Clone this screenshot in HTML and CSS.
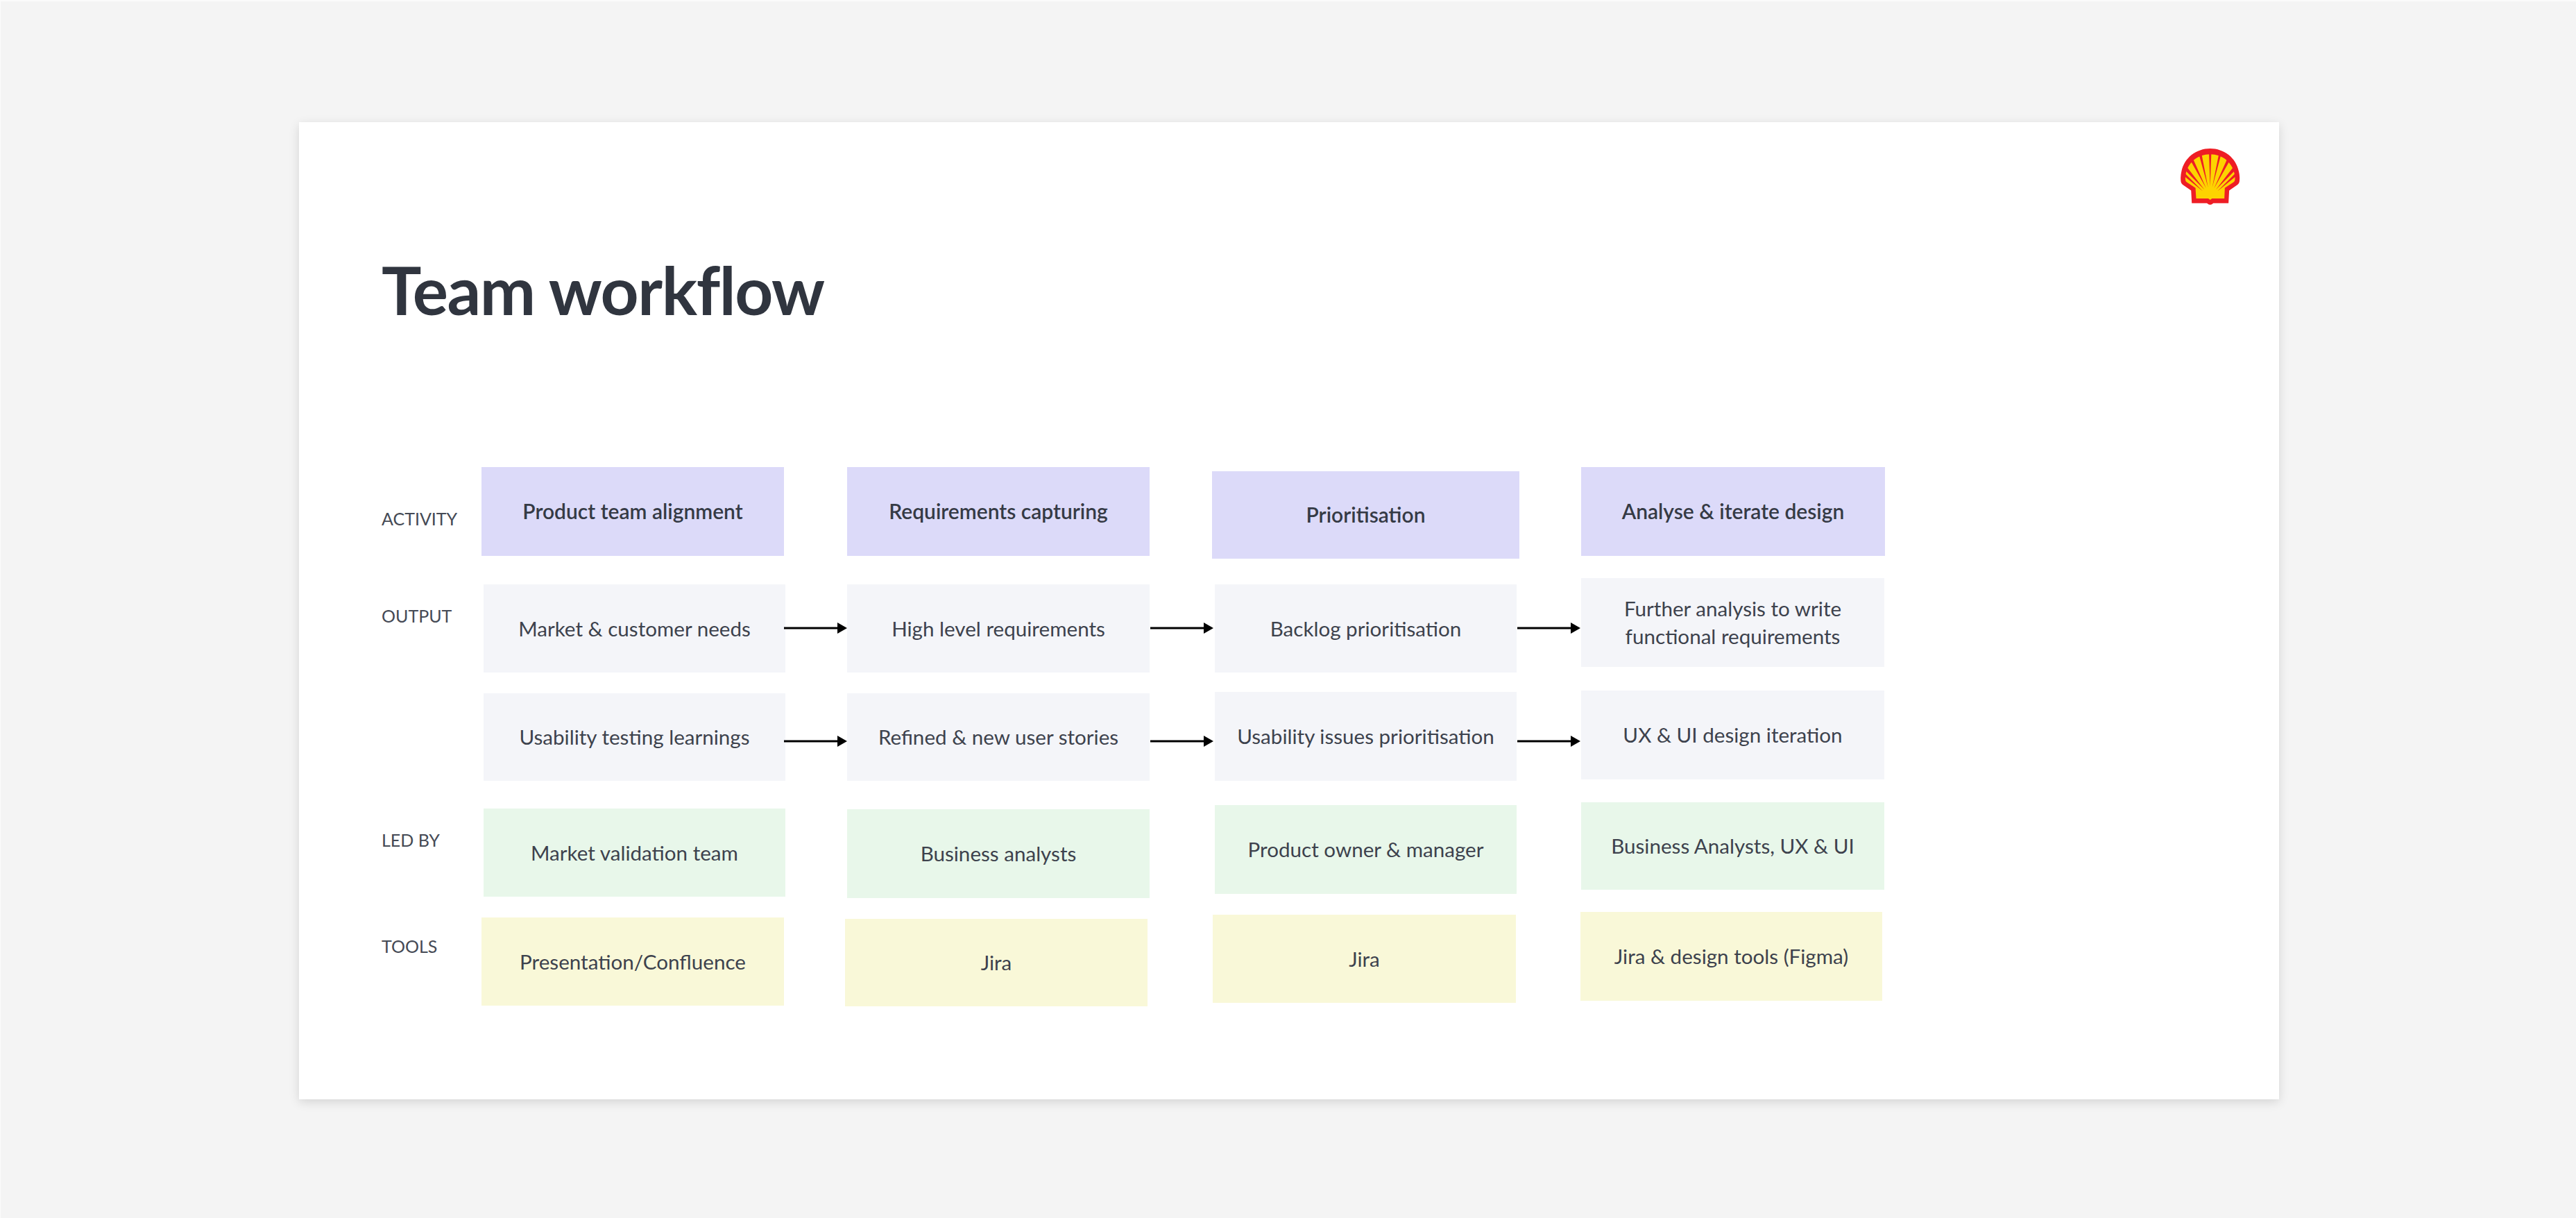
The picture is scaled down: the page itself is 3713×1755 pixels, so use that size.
FILE: index.html
```html
<!DOCTYPE html>
<html lang="en">
<head>
<meta charset="utf-8">
<title>Team workflow</title>
<link rel="stylesheet" href="styles.css">
</head>
<body>
<main class="page">
  <section class="slide">
    <svg class="logo" viewBox="40 25 258 245" aria-label="Shell logo">
      <path class="logo-red" d="M88 263 L85 208 L50 184 Q40 176 40 165 Q38 145 43 125 C55 65 108 25 168 25 C228 25 281 65 293 125 Q298 145 296 165 Q296 176 286 184 L251 208 L248 263 L182 263 Q175 270 168 270 Q161 270 154 263 Z"/>
      <path class="logo-yellow" d="M107 243 L104 197 L66 172 Q60 168 60 160 Q59 150 62 135 C72 85 115 50 168 50 C221 50 264 85 274 135 Q277 150 276 160 Q276 168 270 172 L232 197 L230 243 L176 243 L168 249 L160 243 Z"/>
      <path class="logo-red" d="M163 47 L173 47 L168 190 Z M120 54 L131 50 L159 195 Z M216 50 L205 54 L177 195 Z M84 80 L94 71 L151 199 Z M252 80 L242 71 L185 199 Z M57 118 L67 106 L143 204 Z M279 118 L269 106 L193 204 Z M52 143 L59 134 L136 211 Z M284 143 L277 134 L200 211 Z"/>
    </svg>
    <h1 class="title">Team workflow</h1>
    <div class="board">
      <div class="labels">
        <span class="label">ACTIVITY</span>
        <span class="label">OUTPUT</span>
        <span class="label">LED BY</span>
        <span class="label">TOOLS</span>
      </div>
      <div class="col col-1">
        <div class="card activity">Product team alignment</div>
        <div class="card output">Market &amp; customer needs</div>
        <div class="card output">Usability testing learnings</div>
        <div class="card led">Market validation team</div>
        <div class="card tools">Presentation/Confluence</div>
      </div>
      <div class="arrows arrows-1">
        <svg class="arrow" viewBox="0 0 91 16"><path d="M0 6.5H77V0L91 8L77 16V9.5H0Z"/></svg>
        <svg class="arrow" viewBox="0 0 91 16"><path d="M0 6.5H77V0L91 8L77 16V9.5H0Z"/></svg>
      </div>
      <div class="col col-2">
        <div class="card activity">Requirements capturing</div>
        <div class="card output">High level requirements</div>
        <div class="card output">Refined &amp; new user stories</div>
        <div class="card led">Business analysts</div>
        <div class="card tools">Jira</div>
      </div>
      <div class="arrows arrows-2">
        <svg class="arrow" viewBox="0 0 91 16"><path d="M0 6.5H77V0L91 8L77 16V9.5H0Z"/></svg>
        <svg class="arrow" viewBox="0 0 91 16"><path d="M0 6.5H77V0L91 8L77 16V9.5H0Z"/></svg>
      </div>
      <div class="col col-3">
        <div class="card activity">Prioritisation</div>
        <div class="card output">Backlog prioritisation</div>
        <div class="card output">Usability issues prioritisation</div>
        <div class="card led">Product owner &amp; manager</div>
        <div class="card tools">Jira</div>
      </div>
      <div class="arrows arrows-3">
        <svg class="arrow" viewBox="0 0 91 16"><path d="M0 6.5H77V0L91 8L77 16V9.5H0Z"/></svg>
        <svg class="arrow" viewBox="0 0 91 16"><path d="M0 6.5H77V0L91 8L77 16V9.5H0Z"/></svg>
      </div>
      <div class="col col-4">
        <div class="card activity">Analyse &amp; iterate design</div>
        <div class="card output">Further analysis to write<br>functional requirements</div>
        <div class="card output">UX &amp; UI design iteration</div>
        <div class="card led">Business Analysts, UX &amp; UI</div>
        <div class="card tools">Jira &amp; design tools (Figma)</div>
      </div>
    </div>
  </section>
</main>
</body>
</html>
```

FILE: styles.css
```css
* { box-sizing: border-box; }

html, body { margin: 0; height: 100%; }

body {
  background: #f4f4f4;
  color: #3d424d;
  font-family: "Lato", "Open Sans", sans-serif;
  overflow: hidden;
}

.page {
  height: 1755px;
  padding: 174px 0 0 430px;
  border-top: 2px solid #fbfbfb;
  border-left: 1px solid #fbfbfb;
}

.slide {
  position: relative;
  width: 2854px;
  height: 1408px;
  padding: 191px 0 0 119px;
  background: #fff;
  box-shadow: 0 4px 14px rgba(0, 0, 0, 0.13);
}

.logo {
  position: absolute;
  top: 38px;
  right: 56px;
  width: 86px;
  height: 81px;
}

.logo-red { fill: #ee1d25; }
.logo-yellow { fill: #fdd300; }

.title {
  margin: 0;
  height: 100px;
  font-size: 96px;
  line-height: 100px;
  font-weight: 700;
  letter-spacing: -1.4px;
  color: #30353f;
}

.board {
  display: flex;
  margin-top: 206px;
  margin-left: 1px;
}

.labels {
  display: flex;
  flex-direction: column;
  align-items: flex-start;
  width: 143px;
  flex: none;
  font-size: 25px;
  line-height: 30px;
  color: #454a55;
}

.label:nth-child(1) { margin-top: 59px; margin-left: -1px; }
.label:nth-child(2) { margin-top: 110px; margin-left: -1px; }
.label:nth-child(3) { margin-top: 293px; margin-left: -1px; }
.label:nth-child(4) { margin-top: 123px; margin-left: -1px; }

.col {
  display: flex;
  flex-direction: column;
  flex: none;
}

.col-1 { width: 436px; }
.col-2 { width: 436px; }
.col-3 { width: 440px; }
.col-4 { width: 438px; }

.card {
  display: flex;
  flex: none;
  align-items: center;
  justify-content: center;
  text-align: center;
  font-size: 29.6px;
  line-height: 40px;
}

.activity { background: #dcdaf9; font-size: 30px; font-weight: 600; height: 128px; color: #353a45; padding-bottom: 2px; }
.output { background: #f4f5f9; height: 127px; }
.led { background: #e8f7ea; height: 127px; }
.tools { background: #f9f8d8; height: 127px; }

/* Column 1 */
.col-1 .card { width: 435px; margin-left: 3px; }
.col-1 .activity { width: 436px; margin-left: 0; }
.col-1 .card:nth-child(2) { margin-top: 41px; }
.col-1 .card:nth-child(3) { margin-top: 30px; height: 126px; }
.col-1 .card:nth-child(4) { margin-top: 40px; }
.col-1 .card:nth-child(5) { margin-top: 30px; width: 436px; margin-left: 0; }

/* Column 2 */
.col-2 .card { width: 436px; margin-left: 3px; }
.col-2 .card:nth-child(2) { margin-top: 41px; }
.col-2 .card:nth-child(3) { margin-top: 30px; height: 126px; }
.col-2 .card:nth-child(4) { margin-top: 41px; height: 128px; }
.col-2 .card:nth-child(5) { margin-top: 30px; height: 126px; margin-left: 0; }

/* Column 3 */
.col-3 .card { width: 435px; margin-left: 4px; }
.col-3 .card:nth-child(1) { margin-top: 6px; height: 126px; width: 443px; margin-left: 0; }
.col-3 .card:nth-child(2) { margin-top: 37px; }
.col-3 .card:nth-child(3) { margin-top: 28px; height: 128px; }
.col-3 .card:nth-child(4) { margin-top: 35px; height: 128px; }
.col-3 .card:nth-child(5) { margin-top: 30px; width: 437px; margin-left: 1px; }

/* Column 4 */
.col-4 .card { width: 437px; margin-left: 1px; }
.col-4 .card:nth-child(1) { width: 438px; }
.col-4 .card:nth-child(2) { margin-top: 32px; height: 128px; }
.col-4 .card:nth-child(3) { margin-top: 34px; height: 128px; }
.col-4 .card:nth-child(4) { margin-top: 33px; height: 126px; }
.col-4 .card:nth-child(5) { margin-top: 32px; height: 128px; width: 435px; margin-left: 0; }

.arrows {
  display: flex;
  flex-direction: column;
  flex: none;
  gap: 147px;
  padding-top: 224px;
}

.arrows-1 { width: 88px; }
.arrows-2 { width: 93px; padding-left: 4px; }
.arrows-3 { width: 91px; }

.arrow {
  display: block;
  position: relative;
  width: 91px;
  height: 16px;
  fill: #000;
}
```
